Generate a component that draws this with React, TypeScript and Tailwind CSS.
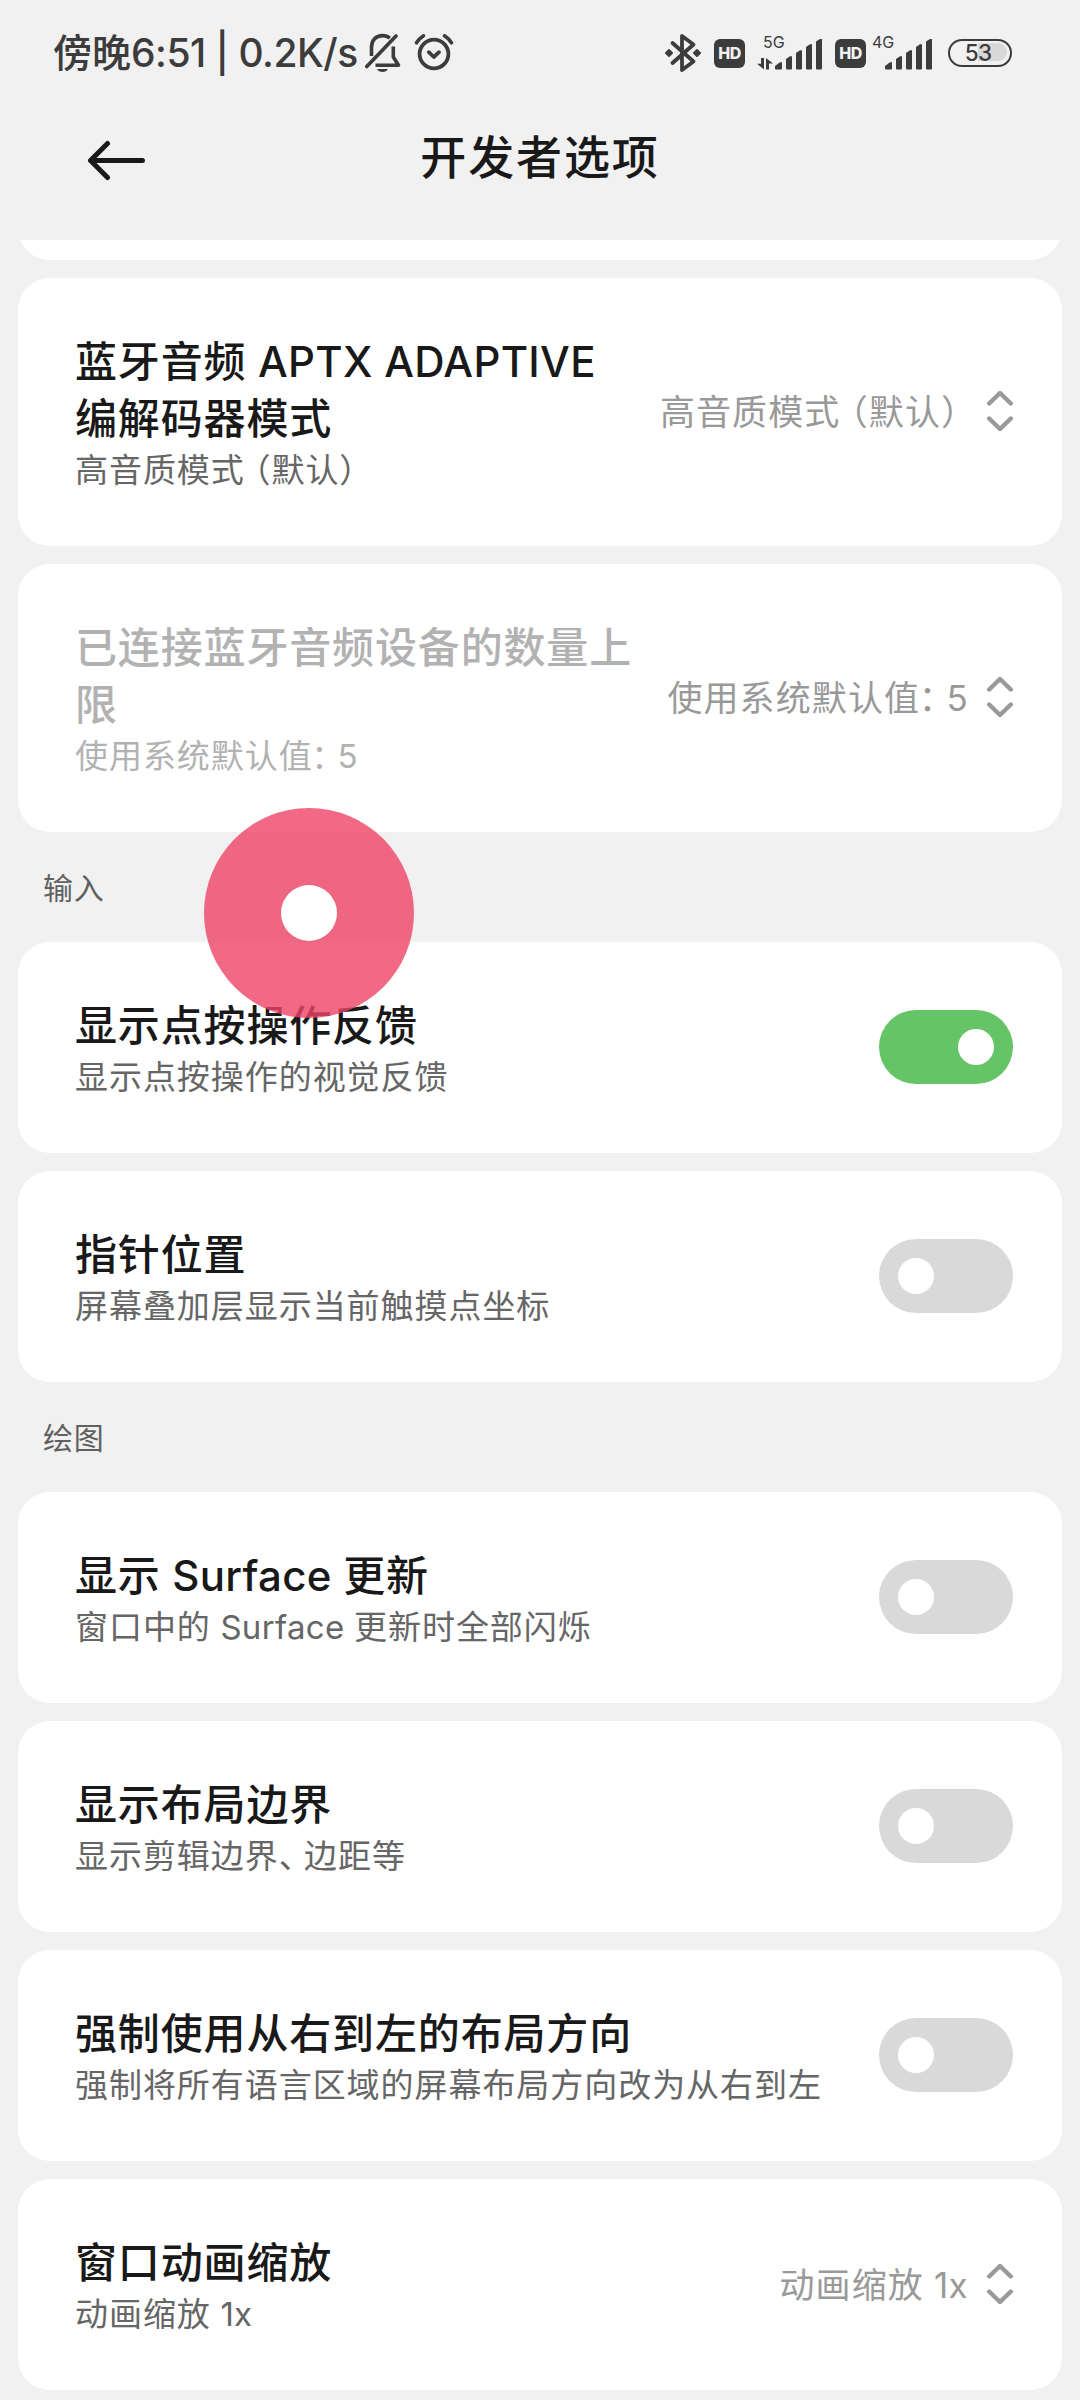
import { useState } from 'react'
import type { ReactNode } from 'react'

// Full-width punctuation takes less than one em in the system font, latin runs are set tighter
function CjkText({ text }: { text: string }) {
  return (
    <>
      {text.split(/([（）：、]|[A-Za-z0-9 ]+)/).map((part, i) => {
        if (part === '（') return <span key={i} className="ml-[0.28em] [font-feature-settings:'halt']">{part}</span>
        if (part === '：') return <span key={i} className="-ml-[0.04em] mr-[0.26em] [font-feature-settings:'halt']">{part}</span>
        if (part === '）' || part === '、') return <span key={i} className="mr-[0.24em] [font-feature-settings:'halt']">{part}</span>
        if (/^[A-Za-z0-9 ]+$/.test(part)) return <span key={i} className="tracking-[0.3px]">{part}</span>
        return part
      })}
    </>
  )
}

function BellOffIcon() {
  return (
    <svg width="36" height="40" viewBox="0 0 36 40" fill="none" stroke="#3c3c3c" strokeWidth="3.6">
      <path d="M6.500 23V14.500C6.500 7 11 2.600 17.500 2.600c3 0 5.500 .9 7.300 2.500" />
      <path d="M10.500 32.300H33.500L28.300 24V13.500" strokeLinejoin="round" />
      <path d="M1.800 33.500L31 3" strokeLinecap="round" />
      <path d="M12 36h11c-1 2-3 3-5.500 3s-4.500-1-5.500-3z" fill="#3c3c3c" stroke="none" />
    </svg>
  )
}

function AlarmIcon() {
  return (
    <svg width="40" height="38" viewBox="0 0 40 38" fill="none" stroke="#3c3c3c" strokeLinecap="round" strokeLinejoin="round">
      <circle cx="20" cy="21" r="14.400" strokeWidth="3.800" />
      <path d="M14.800 19.200l5 4.800 5.200-4.800" strokeWidth="3.800" />
      <path d="M2.500 9.800c1.800-2.800 4-5.100 7-7M37.500 9.800c-1.800-2.800-4-5.100-7-7" strokeWidth="3.600" />
    </svg>
  )
}

function BluetoothIcon() {
  return (
    <svg width="36" height="40" viewBox="0 0 36 40" fill="none" stroke="#3c3c3c" strokeWidth="3.800" strokeLinecap="round" strokeLinejoin="round">
      <path d="M7.500 10L28.500 28.500 17 37V3l11.500 8.500L7.500 30" />
      <path d="M4 17l3 3-3 3-3-3zM32 17l3 3-3 3-3-3z" fill="#3c3c3c" strokeWidth="2" />
    </svg>
  )
}

function HdBadge() {
  return (
    <div className="flex h-[29px] w-[31px] items-center justify-center rounded-[6px] bg-[#3c3c3c] text-[16px] leading-none font-extrabold tracking-[-0.5px] text-[#f1f1f1]">
      HD
    </div>
  )
}

function SignalBars() {
  return (
    <svg width="48" height="31" viewBox="0 0 48 31" fill="#3c3c3c">
      <path d="M0 29v-2l5-3.800h2V29.500a1 1 0 0 1-1 1H1a1 1 0 0 1-1-1z" />
      <path d="M11 20l4-2.700h2V29.500a1 1 0 0 1-1 1h-4a1 1 0 0 1-1-1z" />
      <path d="M21 14l4-2.700h2V29.500a1 1 0 0 1-1 1h-4a1 1 0 0 1-1-1z" />
      <path d="M31 8l4-2.700h2V29.500a1 1 0 0 1-1 1h-4a1 1 0 0 1-1-1z" />
      <path d="M41 2.500L45 0h2V29.500a1 1 0 0 1-1 1h-4a1 1 0 0 1-1-1z" />
    </svg>
  )
}

function DataArrows() {
  return (
    <svg width="16" height="12" viewBox="0 0 16 12" fill="#3c3c3c">
      <path d="M4 0h3v11.500L0 5.800h4z" />
      <path d="M9 11.500h3V5.500h4L9 0z" />
    </svg>
  )
}

function Battery({ level }: { level: number }) {
  return (
    <div className="relative flex h-[28px] w-[64px] items-center justify-center rounded-full border-[2.500px] border-[#3c3c3c]">
      <div className="absolute top-[2px] right-[3px] h-[18px] w-[29px] rounded-r-full bg-[#d8d8d8]" />
      <span className="relative mr-[4px] text-[22.5px] leading-none font-medium tracking-[-0.8px]">{level}</span>
    </div>
  )
}

function StatusBar() {
  return (
    <div className="flex h-[106px] items-center justify-between pr-[68px] pl-[53px] text-[#3c3c3c]">
      <div className="flex items-center">
        <span className="w-[312px] text-[39px] font-medium whitespace-nowrap">
          傍晚<span className="tracking-[-0.5px]">6:51 | 0.2K/s</span>
        </span>
        <BellOffIcon />
        <div className="ml-[13px] -mt-[2px]">
          <AlarmIcon />
        </div>
      </div>
      <div className="flex items-center">
        <BluetoothIcon />
        <div className="ml-[13px]">
          <HdBadge />
        </div>
        <div className="ml-[12px] flex h-[34px] items-end">
          <div className="flex h-full w-[18px] flex-col justify-between">
            <span className="ml-[6px] text-[16px] leading-[12px]">5G</span>
            <DataArrows />
          </div>
          <SignalBars />
        </div>
        <div className="ml-[12px]">
          <HdBadge />
        </div>
        <div className="ml-[6px] flex h-[34px] items-end">
          <span className="w-[13px] self-start text-[16px] leading-[12px]">4G</span>
          <SignalBars />
        </div>
        <div className="ml-[15px]">
          <Battery level={53} />
        </div>
      </div>
    </div>
  )
}

function Header() {
  return (
    <header className="grid h-[134px] grid-cols-[1fr_auto_1fr] items-start">
      <button type="button" className="mt-[34px] ml-[87px] w-[58px]" aria-label="返回">
        <svg width="58" height="42" viewBox="0 0 58 42" fill="none" stroke="#191919" strokeWidth="5" strokeLinecap="round" strokeLinejoin="round">
          <path d="M55.500 20.500H4M20.500 3.500L3.500 20.500l17 17" />
        </svg>
      </button>
      <h1 className="mt-[17px] text-[46px] leading-[68px] font-medium tracking-[1.900px] text-[#191919]">开发者选项</h1>
    </header>
  )
}

function Switch({ initial }: { initial: boolean }) {
  const [on, setOn] = useState(initial)
  return (
    <button
      type="button"
      role="switch"
      aria-checked={on}
      onClick={() => setOn(!on)}
      className={`mb-[1px] flex h-[74px] w-[134px] shrink-0 items-center rounded-full px-[19px] ${on ? 'justify-end bg-[#65c466]' : 'justify-start bg-[#d9d9d9]'}`}
    >
      <span className="size-[36px] rounded-full bg-white" />
    </button>
  )
}

function Picker({ value }: { value: string }) {
  return (
    <div className="flex shrink-0 items-center text-[#999]">
      <span className="mt-[1px] text-[35px] tracking-[1.100px] whitespace-nowrap">
        <CjkText text={value} />
      </span>
      <svg className="-mr-px mb-[2px] ml-[18px]" width="28" height="42" viewBox="0 0 28 42" fill="none" stroke="#999" strokeWidth="4.400" strokeLinecap="round" strokeLinejoin="round">
        <path d="M3.200 13.500L14 3l10.800 10.500M3.200 28.500L14 39l10.800-10.500" />
      </svg>
    </div>
  )
}

interface ItemProps {
  title: string
  summary: string
  disabled?: boolean
  children: ReactNode
}

function Item({ title, summary, disabled, children }: ItemProps) {
  return (
    <div className="flex items-center justify-between rounded-[32px] bg-white pt-[55px] pr-[49px] pb-[53px] pl-[57px]">
      <div className="min-w-0 flex-1">
        <div className={`text-[42px] leading-[57px] font-medium tracking-[0.850px] whitespace-pre-line ${disabled ? 'text-[#b2b2b2]' : 'text-[#191919]'}`}>
          <CjkText text={title} />
        </div>
        <div className={`text-[33px] leading-[46px] tracking-[0.950px] whitespace-nowrap ${disabled ? 'text-[#b2b2b2]' : 'text-[#666]'}`}>
          <CjkText text={summary} />
        </div>
      </div>
      <div className="-mt-[2px] shrink-0">{children}</div>
    </div>
  )
}

function SectionTitle({ children }: { children: ReactNode }) {
  return <div className="h-[110px] pl-[25px] text-[30px] leading-[112px] tracking-[0.700px] text-[#606060]">{children}</div>
}

export default function App() {
  return (
    <div className="relative h-[2400px] w-[1080px] overflow-hidden bg-[#f1f1f1] font-['Inter','Noto_Sans_CJK_SC',sans-serif]">
      <StatusBar />
      <Header />

      <main className="px-[18px]">
        {/* Tail of the card scrolled under the header */}
        <div className="mb-[18px] h-[20px] overflow-hidden">
          <div className="-mt-[60px] h-[80px] rounded-[32px] bg-white" />
        </div>

        <div className="flex flex-col gap-[18px]">
          <Item title={'蓝牙音频 APTX ADAPTIVE\n编解码器模式'} summary="高音质模式（默认）">
            <Picker value="高音质模式（默认）" />
          </Item>
          <Item title={'已连接蓝牙音频设备的数量上\n限'} summary="使用系统默认值：5" disabled>
            <Picker value="使用系统默认值：5" />
          </Item>
        </div>

        <SectionTitle>输入</SectionTitle>
        <div className="flex flex-col gap-[18px]">
          <Item title="显示点按操作反馈" summary="显示点按操作的视觉反馈">
            <Switch initial={true} />
          </Item>
          <Item title="指针位置" summary="屏幕叠加层显示当前触摸点坐标">
            <Switch initial={false} />
          </Item>
        </div>

        <SectionTitle>绘图</SectionTitle>
        <div className="flex flex-col gap-[18px]">
          <Item title="显示 Surface 更新" summary="窗口中的 Surface 更新时全部闪烁">
            <Switch initial={false} />
          </Item>
          <Item title="显示布局边界" summary="显示剪辑边界、边距等">
            <Switch initial={false} />
          </Item>
          <Item title="强制使用从右到左的布局方向" summary="强制将所有语言区域的屏幕布局方向改为从右到左">
            <Switch initial={false} />
          </Item>
          <Item title="窗口动画缩放" summary="动画缩放 1x">
            <Picker value="动画缩放 1x" />
          </Item>
        </div>
      </main>

      {/* Touch feedback dot */}
      <div className="pointer-events-none absolute top-[808px] left-[204px] flex size-[210px] items-center justify-center rounded-full bg-[#ee4465]/80">
        <div className="size-[56px] rounded-full bg-white" />
      </div>
    </div>
  )
}
